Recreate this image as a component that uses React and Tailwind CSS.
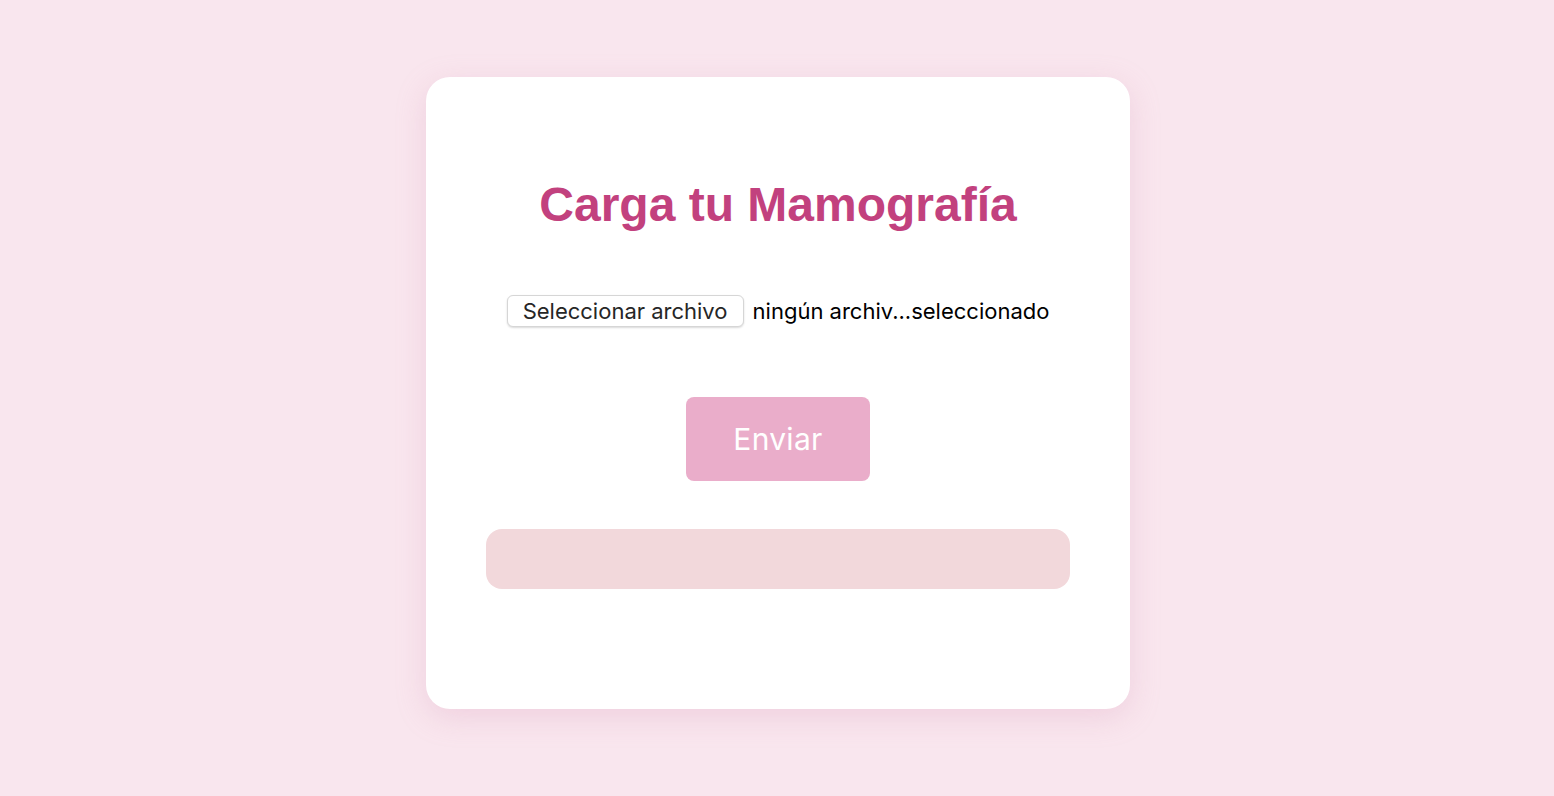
export default function App() {
  return (
    <div className="min-h-screen w-full bg-[#f9e6ee] pl-[2px] pt-[77px]">
      <div className="mx-auto flex h-[632px] w-[704px] flex-col items-center rounded-[24px] bg-white px-[60px] pt-[104px] shadow-[0_8px_30px_rgba(214,150,182,0.28)]">
        <h1 className="text-[48px] font-bold leading-none text-[#c2417e] [font-family:'Liberation_Sans',Arial,sans-serif]">
          Carga tu Mamografía
        </h1>

        <div className="mt-[66px] flex h-[32px] items-center gap-[9px] [font-family:Inter,'Noto_Sans',sans-serif]">
          <div className="flex h-[32px] w-[237px] items-center justify-center rounded-[6px] border border-[#d6d6d6] bg-white text-[22px] leading-none text-[#262626] shadow-[0_1px_2px_rgba(0,0,0,0.15)]">
            Seleccionar archivo
          </div>
          <span className="whitespace-nowrap text-[22px] leading-none text-black">
            ningún archiv...seleccionado
          </span>
        </div>

        <button className="mt-[70px] flex h-[84px] w-[184px] items-center justify-center rounded-[8px] bg-[#eaadca] text-[30px] tracking-[0.01em] text-white [font-family:Inter,'Noto_Sans',sans-serif]">
          Enviar
        </button>

        <div className="mt-[48px] h-[60px] w-full rounded-[16px] bg-[#f2d8db]"></div>
      </div>
    </div>
  );
}
